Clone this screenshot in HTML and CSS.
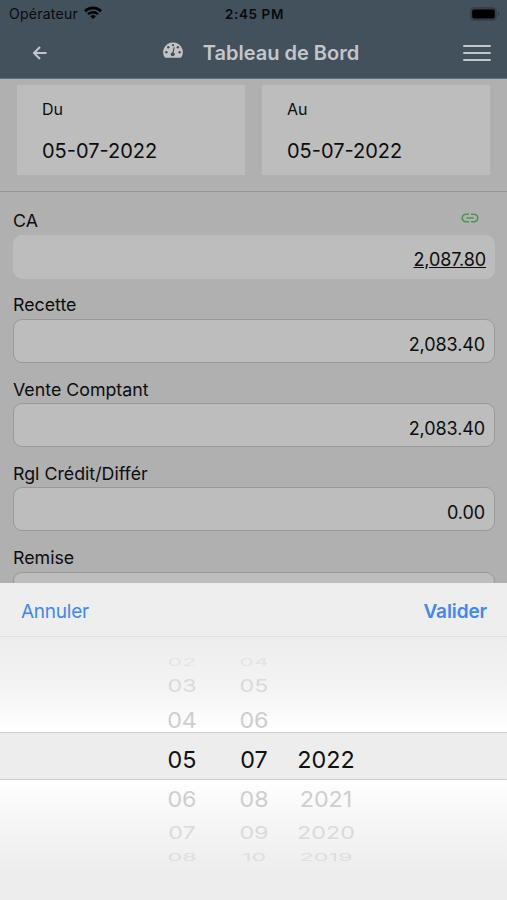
FILE: index.html
```html
<!DOCTYPE html>
<html lang="fr">
<head>
  <meta charset="UTF-8">
  <title>Tableau de Bord</title>
  <meta name="viewport" content="width=device-width, initial-scale=1">
  <link rel="stylesheet" href="styles.css">
</head>
<body>
  <div class="app">
    <header class="header">
      <div class="status-bar">
        <div class="carrier">
          <span>Opérateur</span>
          <svg class="wifi" viewBox="0 0 18 13" width="18" height="13">
            <path d="M1 5.2a11.4 11.4 0 0 1 16 0" fill="none" stroke="#000" stroke-width="2.8"/>
            <path d="M4 8.3a7.1 7.1 0 0 1 10 0" fill="none" stroke="#000" stroke-width="2.3"/>
            <path d="M9 13L6.2 10.3a4 4 0 0 1 5.6 0z"/>
          </svg>
        </div>
        <div class="clock">2:45 PM</div>
        <svg class="battery" viewBox="0 0 30 14" width="30" height="14">
          <rect x="0.5" y="0.5" width="26" height="13" rx="4" fill="#353f48" stroke="#35414a"/>
          <rect x="2.2" y="2.5" width="22.6" height="9" rx="2" fill="#000"/>
          <path d="M28 5v4q1.4-.5 1.4-2T28 5z" fill="#303b44"/>
        </svg>
      </div>
      <div class="nav-bar">
        <svg class="back" viewBox="0 0 14 14" width="14" height="14">
          <path d="M13.5 7H1M7 1L1 7l6 6" fill="none" stroke="#c2c5c9" stroke-width="2"/>
        </svg>
        <div class="title">
          <svg class="gauge" viewBox="0 0 20 17" width="20" height="17">
            <path d="M10 .5A9.7 9.7 0 0 0 1.5 15q.4.8 1.3.8h14.4q.9 0 1.3-.8A9.7 9.7 0 0 0 10 .5z" fill="#c4c4c4"/>
            <g fill="#43515d">
              <circle cx="10" cy="3.2" r="1.1"/>
              <circle cx="5.3" cy="5.3" r="1.2"/>
              <circle cx="14.9" cy="5.3" r="1.2"/>
              <circle cx="3.4" cy="10.2" r="1.2"/>
              <circle cx="16.6" cy="10.2" r="1.2"/>
              <circle cx="9.7" cy="12.2" r="2"/>
            </g>
            <path d="M9.8 12l1.3-6.6" stroke="#43515d" stroke-width="1.2"/>
          </svg>
          <h1>Tableau de Bord</h1>
        </div>
        <div class="menu">
          <span></span>
          <span></span>
          <span></span>
        </div>
      </div>
    </header>

    <section class="dates">
      <div class="date-card">
        <span class="date-label">Du</span>
        <span class="date-value">05-07-2022</span>
      </div>
      <div class="date-card">
        <span class="date-label">Au</span>
        <span class="date-value">05-07-2022</span>
      </div>
    </section>

    <main class="fields">
      <div class="field linked">
        <div class="field-label">
          <span>CA</span>
          <svg class="link" viewBox="0 0 18 10" width="18" height="10">
            <path d="M8 1.2H5a3.8 3.8 0 0 0 0 7.6h3M10 1.2h3a3.8 3.8 0 0 1 0 7.6h-3M5.4 5h7.2" fill="none" stroke="#4d9650" stroke-width="1.6"/>
          </svg>
        </div>
        <div class="field-value">2,087.80</div>
      </div>
      <div class="field">
        <div class="field-label">Recette</div>
        <div class="field-value">2,083.40</div>
      </div>
      <div class="field">
        <div class="field-label">Vente Comptant</div>
        <div class="field-value">2,083.40</div>
      </div>
      <div class="field">
        <div class="field-label">Rgl Crédit/Différ</div>
        <div class="field-value">0.00</div>
      </div>
      <div class="field">
        <div class="field-label">Remise</div>
        <div class="field-value"></div>
      </div>
    </main>

    <section class="sheet">
      <div class="sheet-actions">
        <span class="cancel">Annuler</span>
        <span class="confirm">Valider</span>
      </div>
      <div class="wheel">
        <div class="row far top"><span>02</span><span>04</span><span></span></div>
        <div class="row mid"><span>03</span><span>05</span><span></span></div>
        <div class="row near"><span>04</span><span>06</span><span></span></div>
        <div class="row selected"><span>05</span><span>07</span><span>2022</span></div>
        <div class="row near after"><span>06</span><span>08</span><span>2021</span></div>
        <div class="row mid"><span>07</span><span>09</span><span>2020</span></div>
        <div class="row far"><span>08</span><span>10</span><span>2019</span></div>
      </div>
    </section>
  </div>
</body>
</html>
```
FILE: styles.css
```css
* {
  box-sizing: border-box;
}
html, body {
  height: 100%;
  margin: 0;
  overflow: hidden;
}
body {
  font-family: Inter, "Liberation Sans", sans-serif;
  background: #b0b0b0;
  color: #0c0c0c;
}
svg {
  display: block;
  flex-shrink: 0;
}
.app {
  display: flex;
  flex-direction: column;
  height: 900px;
  overflow: hidden;
}

/* header */
.header {
  flex: none;
  height: 79px;
  background: #43515d;
  border-bottom: 1px solid #5b7080;
}
.status-bar {
  display: grid;
  grid-template-columns: 1fr auto 1fr;
  align-items: center;
  height: 27px;
  padding: 0 7px 0 9px;
  color: #080a0c;
}
.carrier {
  display: flex;
  align-items: center;
  gap: 6px;
  font-size: 14px;
  letter-spacing: 0.25px;
}
.carrier .wifi {
  margin-top: -2px;
}
.clock {
  font-size: 13.5px;
  font-weight: 600;
  letter-spacing: 0.6px;
}
.battery {
  justify-self: end;
}
.nav-bar {
  display: flex;
  align-items: center;
  justify-content: space-between;
  height: 51px;
  padding: 0 16px 0 33px;
}
.title {
  display: flex;
  align-items: center;
  gap: 20px;
  margin-left: 12px;
}
.title h1 {
  margin: 0;
  font-size: 20px;
  font-weight: 600;
  letter-spacing: 0;
  color: #c3c6ca;
}
.gauge {
  margin-top: -4px;
}
.menu {
  display: flex;
  flex-direction: column;
  gap: 5px;
  width: 28px;
  margin-top: 1px;
}
.menu span {
  height: 2px;
  border-radius: 1px;
  background: #c3c6ca;
}

/* period */
.dates {
  display: grid;
  grid-template-columns: 1fr 1fr;
  gap: 17px;
  flex: none;
  height: 113px;
  padding: 6px 17px 16px;
  border-bottom: 1px solid #949494;
}
.date-card {
  display: flex;
  flex-direction: column;
  gap: 20px;
  padding: 14px 25px 12px;
  background: #bdbdbd;
}
.date-label {
  font-size: 16px;
  line-height: 20px;
}
.date-value {
  font-size: 20px;
  line-height: 24px;
}

/* amounts */
.fields {
  flex: none;
  display: flex;
  flex-direction: column;
  height: 391px;
  padding: 16px 12px 0 13px;
  overflow: hidden;
}
.field {
  flex: none;
  height: 84.3px;
}
.field-label {
  display: flex;
  justify-content: space-between;
  height: 26.5px;
  padding-right: 16px;
  font-size: 17.8px;
  line-height: 26px;
}
.link {
  margin-top: 5px;
}
.field-value {
  height: 44px;
  padding: 4px 9px 0 0;
  border: 1.5px solid #999;
  border-radius: 9px;
  background: #bdbdbd;
  font-size: 18px;
  line-height: 41px;
  letter-spacing: -0.1px;
  text-align: right;
}
.linked .field-value {
  padding-right: 8px;
  line-height: 39px;
  border-color: #bdbdbd;
  text-decoration: underline;
}

/* date picker */
.sheet {
  flex: 1;
  display: flex;
  flex-direction: column;
  background: #eee;
}
.sheet-actions {
  display: flex;
  justify-content: space-between;
  align-items: center;
  flex: none;
  height: 54px;
  padding: 3px 20px 0 21px;
  border-bottom: 1px solid #e0e0e0;
  font-size: 19px;
  color: #4386f6;
}
.cancel {
  letter-spacing: -0.25px;
}
.confirm {
  font-weight: 600;
  letter-spacing: -0.1px;
}
.wheel {
  flex: 1;
  display: flex;
  flex-direction: column;
  padding-top: 19px;
  background: linear-gradient(#ededed, #f4f4f4 20%, #fff 36%, #fff 54%, #f6f6f6 70%, #ededed 90%);
}
.row {
  display: grid;
  grid-template-columns: repeat(3, 72px);
  justify-content: center;
  align-content: center;
  flex: none;
  padding-left: 1px;
  text-align: center;
  font-size: 23.3px;
  line-height: 24px;
}
.near {
  height: 24px;
  color: #cecece;
}
.near.after {
  margin-top: 7px;
}
.mid {
  height: 20px;
  margin: 12px 0 8px;
  color: #dadada;
}
.far + .mid {
  margin: 8px 0 12px;
}
.far {
  height: 12px;
  color: #dedede;
}
.far.top {
  color: #e4e4e4;
}
.near span {
  transform: scaleY(0.94);
}
.mid span {
  transform: scaleY(0.76);
}
.far span {
  transform: scaleY(0.46);
}
.selected {
  height: 48px;
  padding-top: 8px;
  border-top: 1.5px solid #cfcfcf;
  border-bottom: 1.5px solid #cfcfcf;
  background: #ededed;
  color: #111;
}
```
